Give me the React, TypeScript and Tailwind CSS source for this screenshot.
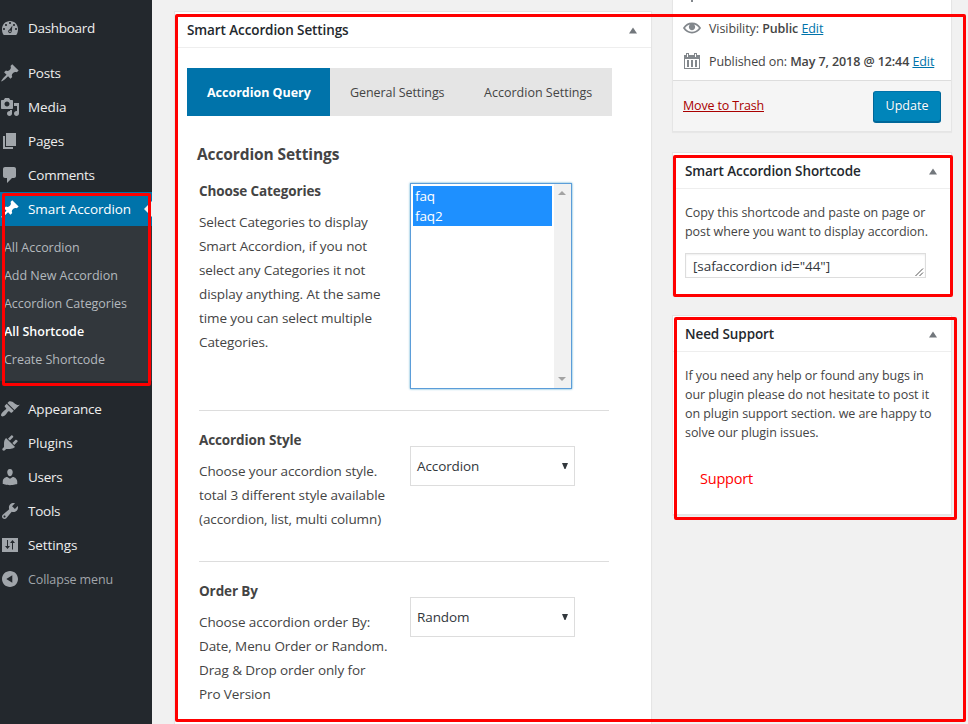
import type { ReactNode } from "react";

const ICONS = {
  dashboard:
    "M3.76 17h12.48c1.34-1.63 1.76-3.57 1.76-6 0-4.41-3.58-8-8-8s-8 3.59-8 8c0 2.43.42 4.37 1.76 6zM10 4c.55 0 1 .45 1 1s-.45 1-1 1-1-.45-1-1 .45-1 1-1zM6 6c.55 0 1 .45 1 1s-.45 1-1 1-1-.45-1-1 .45-1 1-1zm8 0c.55 0 1 .45 1 1s-.45 1-1 1-1-.45-1-1 .45-1 1-1zm-1.6 1.5l-.6 5.2c-.05.2-.1.45-.1.65 0 1.1-.75 1.9-1.75 1.9s-1.85-.9-1.8-1.9c.05-.9.7-1.5 1.35-1.8zM4 10c.55 0 1 .45 1 1s-.45 1-1 1-1-.45-1-1 .45-1 1-1zm12 0c.55 0 1 .45 1 1s-.45 1-1 1-1-.45-1-1 .45-1 1-1zm-6 2.6c-.5 0-.85.4-.85.85s.35.85.85.85.85-.4.85-.85-.35-.85-.85-.85z",
  pin: "M10.44 3.02l1.82-1.82 6.36 6.35-1.83 1.82c-1.05-.68-2.48-.57-3.41.36l-.75.75c-.92.93-1.04 2.35-.35 3.41l-1.83 1.82-2.41-2.41-2.8 2.79c-.42.42-3.38 2.71-3.8 2.29s1.86-3.39 2.28-3.81l2.79-2.79L4.1 9.36l1.83-1.82c1.05.69 2.48.57 3.4-.36l.75-.75c.93-.92 1.05-2.35.36-3.41z",
  media:
    "M13 11V4c0-.55-.45-1-1-1h-1.67L9 1H5L3.67 3H2c-.55 0-1 .45-1 1v7c0 .55.45 1 1 1h10c.55 0 1-.45 1-1zM7 4.5c1.38 0 2.5 1.12 2.5 2.5S8.38 9.5 7 9.5 4.5 8.38 4.5 7 5.62 4.5 7 4.5zM14 6h5v10.5c0 1.38-1.12 2.5-2.5 2.5S14 17.88 14 16.5s1.12-2.5 2.5-2.5c.17 0 .34.02.5.05V9h-3V6zm-4 8.05V13h2v3.5c0 1.38-1.12 2.5-2.5 2.5S7 17.88 7 16.5 8.12 14 9.5 14c.17 0 .34.02.5.05z",
  page: "M6 15V2h10v13H6zm-1 1h8v2H3V5h2v11z",
  comment:
    "M5 2h9c1.1 0 2 .9 2 2v7c0 1.1-.9 2-2 2h-2l-5 5v-5H5c-1.1 0-2-.9-2-2V4c0-1.1.9-2 2-2z",
  brush:
    "M14.48 11.06L7.41 3.99l1.5-1.5c.5-.56 2.3-.47 3.51.32 1.21.8 1.43 1.28 2.91 2.1 1.18.64 2.45 1.26 4.45.85zm-.71.71L6.7 4.7 4.93 6.47c-.39.39-.39 1.02 0 1.41l1.06 1.06c.39.39.39 1.03 0 1.42-.6.6-1.43 1.11-2.21 1.69-.35.26-.7.53-1.01.84C1.43 14.23.4 16.08 1.4 17.07c.99 1 2.84-.03 4.18-1.36.31-.31.58-.66.85-1.02.57-.78 1.08-1.61 1.69-2.21.39-.39 1.02-.39 1.41 0l1.06 1.06c.39.39 1.02.39 1.41 0z",
  plug: "M13.11 4.36L9.87 7.6 8 5.73l3.24-3.24c.35-.34 1.05-.2 1.56.32.52.51.66 1.21.31 1.55zm-8 1.77l.91-1.12 9.01 9.01-1.19.84c-.71.71-2.63 1.16-3.82 1.16H6.14L4.9 17.26c-.59.59-1.54.59-2.12 0-.59-.58-.59-1.53 0-2.12l1.24-1.24v-3.88c0-1.13.4-3.19 1.09-3.89zm7.26 3.97l3.24-3.24c.34-.35 1.04-.21 1.55.31.52.51.66 1.21.31 1.55l-3.24 3.25z",
  user: "M10 9.25c-2.27 0-2.73-3.44-2.73-3.44C7 4.02 7.82 2 9.97 2c2.16 0 2.98 2.02 2.71 3.81 0 0-.41 3.44-2.68 3.44zm0 2.57L12.72 10c2.39 0 4.52 2.33 4.52 4.53v2.49s-3.65 1.13-7.24 1.13c-3.65 0-7.24-1.13-7.24-1.13v-2.49c0-2.25 1.94-4.48 4.47-4.48z",
  wrench:
    "M16.68 9.77c-1.34 1.34-3.3 1.67-4.95.99l-5.41 6.52c-.99.99-2.59.99-3.58 0s-.99-2.59 0-3.57l6.52-5.42c-.68-1.65-.35-3.61.99-4.95 1.28-1.28 3.12-1.62 4.72-1.06l-2.89 2.89 2.82 2.82 2.86-2.87c.53 1.58.18 3.39-1.08 4.65zM3.81 16.21c.4.39 1.04.39 1.43 0 .4-.4.4-1.04 0-1.43-.39-.4-1.03-.4-1.43 0-.39.39-.39 1.03 0 1.43z",
  sliders:
    "M18 17V3H2v14h16zM7 5h1v6h2l-2.500 3L5 11h2zM12.500 5 15 8h-2v6.500h-1V8h-2z",
  collapse:
    "M10 2c4.42 0 8 3.58 8 8s-3.58 8-8 8-8-3.58-8-8 3.58-8 8-8zm2.3 4.2L6.3 10l6 3.8z",
  eye: "M19.7 9.4C17.7 6 14 3.9 10 3.9S2.3 6 .3 9.4L0 10l.3.6c2 3.4 5.7 5.5 9.7 5.5s7.7-2.1 9.7-5.5l.3-.6-.3-.6zM10 14.1c-3.1 0-6-1.6-7.7-4.1C3.6 8 5.7 6.6 8 6.1c-.9.6-1.5 1.7-1.5 2.9 0 1.9 1.6 3.5 3.5 3.5s3.5-1.6 3.5-3.5c0-1.2-.6-2.3-1.5-2.9 2.3.5 4.4 1.9 5.7 3.9-1.7 2.5-4.6 4.1-7.7 4.1z",
  calendar:
    "M2 4h2V2h3v2h5V2h3v2h3v14H2zM3 8v9h14V8zM5 9h2v7H5zM9 9h2v7H9zM13 9h2v7h-2zM5 3v3h1V3zM13 3v3h1V3z",
};

type IconName = keyof typeof ICONS;

function Icon({ name, className = "size-5" }: { name: IconName; className?: string }) {
  return (
    <svg viewBox="0 0 20 20" className={`shrink-0 ${className}`} fill="currentColor" fillRule="evenodd">
      <path d={ICONS[name]} />
    </svg>
  );
}

function MenuItem({
  icon,
  label,
  className = "text-[#eee]",
  textClass = "text-[13.5px] tracking-[-0.09px]",
}: {
  icon: IconName;
  label: string;
  className?: string;
  textClass?: string;
}) {
  return (
    <li className={`flex h-[34px] shrink-0 items-center gap-2 ${className}`}>
      <Icon name={icon} className={className.includes("bg-") ? "size-5 text-white" : "size-5 text-[#a0a5aa]"} />
      <span className={textClass}>{label}</span>
    </li>
  );
}

const SUBMENU = [
  { label: "All Accordion" },
  { label: "Add New Accordion" },
  { label: "Accordion Categories" },
  { label: "All Shortcode", current: true },
  { label: "Create Shortcode" },
];

function Sidebar() {
  return (
    <nav className="h-full w-[152px] shrink-0 overflow-hidden bg-[#23282d] pt-[11px]">
      <ul className="flex flex-col">
        <MenuItem icon="dashboard" label="Dashboard" textClass="text-[13.5px] tracking-[-0.3px]" />
        <li className="h-[11px]" />
        <MenuItem icon="pin" label="Posts" textClass="text-[13.5px] tracking-[-0.25px]" />
        <MenuItem icon="media" label="Media" />
        <MenuItem icon="page" label="Pages" textClass="text-[13.5px] tracking-[-0.2px]" />
        <MenuItem icon="comment" label="Comments" textClass="text-[13.5px] tracking-[-0.24px]" />
        <li className="relative">
          <ul>
            <MenuItem icon="pin" label="Smart Accordion" className="bg-[#0073aa] text-white" />
          </ul>
          <span className="absolute top-[9px] right-0 border-y-8 border-r-8 border-y-transparent border-r-[#f1f1f1]" />
          <ul className="bg-[#32373c] pt-2 pb-[7px]">
            {SUBMENU.map(({ label, current }) => (
              <li
                key={label}
                className={`flex h-7 items-center pl-1 text-[12.5px] ${
                  current ? "font-semibold text-white" : "tracking-[-0.03px] text-[#b4b9be]"
                }`}
              >
                {label}
              </li>
            ))}
          </ul>
        </li>
        <li className="h-[11px]" />
        <MenuItem icon="brush" label="Appearance" textClass="text-[13.5px] tracking-[-0.17px]" />
        <MenuItem icon="plug" label="Plugins" />
        <MenuItem icon="user" label="Users" textClass="text-[13.5px] tracking-[-0.28px]" />
        <MenuItem icon="wrench" label="Tools" textClass="text-[13.5px] tracking-[-0.25px]" />
        <MenuItem icon="sliders" label="Settings" />
        <MenuItem
          icon="collapse"
          label="Collapse menu"
          className="text-[#a0a5aa]"
          textClass="pt-0.5 text-[12.5px] tracking-[-0.1px]"
        />
      </ul>
    </nav>
  );
}

function PanelHeader({ title }: { title: string }) {
  return (
    <div className="flex h-9 items-center justify-between border-b border-[#eee] pr-[14px] pl-3">
      <h2 className="pt-0.5 text-[13.5px] font-semibold tracking-[-0.1px] text-[#23282d]">{title}</h2>
      <svg width="8" height="7" viewBox="0 0 8 7" className="mt-px fill-[#72777c]">
        <path d="M4 0.500 8 6.500H0z" />
      </svg>
    </div>
  );
}

function Panel({ className = "", children }: { className?: string; children: ReactNode }) {
  return (
    <section className={`shrink-0 border border-[#e5e5e5] bg-white shadow-[0_1px_1px_rgba(0,0,0,0.04)] ${className}`}>
      {children}
    </section>
  );
}

function Field({
  label,
  lines,
  className,
  children,
}: {
  label: string;
  lines: string[];
  className: string;
  children: ReactNode;
}) {
  return (
    <div className={`ml-3 flex w-[410px] ${className}`}>
      <div className="w-[211px] shrink-0">
        <h4 className="text-[13.5px] leading-[18px] font-bold tracking-[-0.12px]">{label}</h4>
        <p className="mt-[10px] text-[13.5px] leading-6 tracking-[-0.1px]">
          {lines.map((line) => (
            <span key={line} className="block whitespace-nowrap">
              {line}
            </span>
          ))}
        </p>
      </div>
      {children}
    </div>
  );
}

function Select({ value }: { value: string }) {
  return (
    <div className="mt-[15px] flex h-10 w-[165px] items-center justify-between border border-[#ddd] bg-white pr-[6px] pl-[6px] text-[13.5px] tracking-[-0.1px] text-[#32373c]">
      {value}
      <svg width="6" height="6" viewBox="0 0 6 6" className="fill-[#32373c]">
        <path d="M0 0h6L3.500 6h-1z" />
      </svg>
    </div>
  );
}

function CategoryList() {
  return (
    <div className="mt-px flex h-[206px] w-[162px] border border-[#5b9dd9] bg-white shadow-[0_0_2px_rgba(30,140,190,0.8)]">
      <ul className="w-[141px] pt-[2px] pl-[2px]">
        {["faq", "faq2"].map((option) => (
          <li key={option} className="flex h-5 items-center bg-[#1e90ff] pl-[2px] text-[13.5px] tracking-[-0.1px] text-white">
            {option}
          </li>
        ))}
      </ul>
      <div className="ml-[2px] flex flex-1 flex-col items-center justify-between bg-[#f1f1f1] py-[7px]">
        <svg width="8" height="4" viewBox="0 0 8 4" className="mr-px fill-[#a3a3a3]">
          <path d="M4 0 8 4H0z" />
        </svg>
        <svg width="8" height="4" viewBox="0 0 8 4" className="mr-px fill-[#a3a3a3]">
          <path d="M0 0h8L4 4z" />
        </svg>
      </div>
    </div>
  );
}

function SettingsPanel() {
  return (
    <Panel className="h-[760px] w-[478px]">
      <PanelHeader title="Smart Accordion Settings" />
      <div className="px-3 pt-5">
        <div className="flex h-12 w-[425px] items-center bg-[#e5e5e5] text-[12.5px]">
          <div className="flex h-full w-[143px] items-center bg-[#0073aa] pt-0.5 pl-5 font-bold tracking-[-0.02px] text-white">
            Accordion Query
          </div>
          <div className="w-[134px] pt-0.5 pl-5 tracking-[-0.07px]">General Settings</div>
          <div className="pt-0.5 pl-5 tracking-[0.01px] whitespace-nowrap">Accordion Settings</div>
        </div>
        <h3 className="mt-[27px] ml-[10px] text-[15.5px] leading-[22px] font-bold tracking-[-0.1px]">
          Accordion Settings
        </h3>
        <Field
          className="mt-[17px] h-[229px] border-b border-[#ddd]"
          label="Choose Categories"
          lines={[
            "Select Categories to display",
            "Smart Accordion, if you not",
            "select any Categories it not",
            "display anything. At the same",
            "time you can select multiple",
            "Categories.",
          ]}
        >
          <CategoryList />
        </Field>
        <Field
          className="h-[151px] border-b border-[#ddd] pt-5"
          label="Accordion Style"
          lines={["Choose your accordion style.", "total 3 different style available", "(accordion, list, multi column)"]}
        >
          <Select value="Accordion" />
        </Field>
        <Field
          className="pt-5"
          label="Order By"
          lines={["Choose accordion order By:", "Date, Menu Order or Random.", "Drag & Drop order only for", "Pro Version"]}
        >
          <Select value="Random" />
        </Field>
      </div>
    </Panel>
  );
}

function PublishPanel() {
  return (
    <Panel className="h-[132px] w-[280px] border-t-0 text-[12.5px]">
      <div className="flex h-[11px] items-start pl-[17px]">
        <svg width="4" height="3" className="fill-[#82878c]">
          <path d="M1 0h2v2H1z" />
        </svg>
      </div>
      <div className="flex h-[34px] items-center pl-[10px]">
        <Icon name="eye" className="mr-2 size-[18px] text-[#82878c]" />
        <p className="pt-0.5 tracking-[-0.08px]">
          Visibility: <b className="font-semibold">Public</b> <a className="text-[#0073aa] underline">Edit</a>
        </p>
      </div>
      <div className="flex h-9 items-center border-b border-[#ddd] pb-[3px] pl-[9px]">
        <Icon name="calendar" className="mr-[7px] size-5 text-[#82878c]" />
        <p className="pt-[3px] tracking-[-0.09px] whitespace-nowrap">
          Published on: <b className="font-semibold">May 7, 2018 @ 12:44</b>{" "}
          <a className="text-[#0073aa] underline">Edit</a>
        </p>
      </div>
      <div className="flex h-[50px] items-center justify-between bg-[#f5f5f5] pr-[10px] pl-[10px]">
        <a className="tracking-[-0.16px] text-[#a00] underline">Move to Trash</a>
        <button className="h-[31px] w-[68px] rounded-[3px] border border-[#006799] border-t-[#0073aa] bg-[#0085ba] pt-px text-[12.5px] text-white shadow-[0_1px_0_#006799] [text-shadow:0_-1px_1px_#006799]">
          Update
        </button>
      </div>
    </Panel>
  );
}

function TextLines({ lines }: { lines: string[] }) {
  return (
    <p className="text-[12.5px] leading-[19px] tracking-[-0.06px]">
      {lines.map((line) => (
        <span key={line} className="block whitespace-nowrap">
          {line}
        </span>
      ))}
    </p>
  );
}

function ShortcodePanel() {
  return (
    <Panel className="h-[143px] w-[280px]">
      <PanelHeader title="Smart Accordion Shortcode" />
      <div className="px-3 pt-[14px]">
        <TextLines lines={["Copy this shortcode and paste on page or", "post where you want to display accordion."]} />
        <div className="mt-3 flex h-[25px] w-[241px] items-center justify-between border border-[#ddd] pr-px pl-[7px] text-[13.5px] tracking-[-0.07px] text-[#32373c] shadow-[inset_0_1px_2px_rgba(0,0,0,0.07)]">
          <span className="pt-0.5">[safaccordion id="44"]</span>
          <svg width="9" height="9" viewBox="0 0 9 9" className="self-end stroke-[#555]">
            <path d="M0.500 8 8 0.500M4.500 8 8 4.500" />
          </svg>
        </div>
      </div>
    </Panel>
  );
}

function SupportPanel() {
  return (
    <Panel className="h-[200px] w-[280px]">
      <PanelHeader title="Need Support" />
      <div className="px-3 pt-[14px]">
        <TextLines
          lines={[
            "If you need any help or found any bugs in",
            "our plugin please do not hesitate to post it",
            "on plugin support section. we are happy to",
            "solve our plugin issues.",
          ]}
        />
        <a className="mt-[26px] ml-[15px] block text-[14.5px] leading-[22px] tracking-[-0.2px] text-[#f00]">Support</a>
      </div>
    </Panel>
  );
}

const HIGHLIGHTS = [
  "top-[193px] left-[2px] h-[193px] w-[149px]",
  "top-[14px] left-[175px] h-[708px] w-[791px]",
  "top-[155px] left-[673px] h-[142px] w-[280px]",
  "top-[317px] left-[674px] h-[203px] w-[283px]",
];

export default function App() {
  return (
    <div className="relative flex h-[724px] w-[968px] overflow-hidden bg-[#f1f1f1] font-['Open_Sans','Noto_Sans',sans-serif] text-[#444]">
      <Sidebar />
      <main className="flex items-start gap-5 pl-[22px]">
        <div className="pt-[11px]">
          <SettingsPanel />
        </div>
        <div className="flex flex-col gap-5">
          <PublishPanel />
          <ShortcodePanel />
          <SupportPanel />
        </div>
      </main>
      {HIGHLIGHTS.map((box) => (
        <div key={box} className={`pointer-events-none absolute rounded-[2px] border-3 border-[#f00] ${box}`} />
      ))}
    </div>
  );
}
